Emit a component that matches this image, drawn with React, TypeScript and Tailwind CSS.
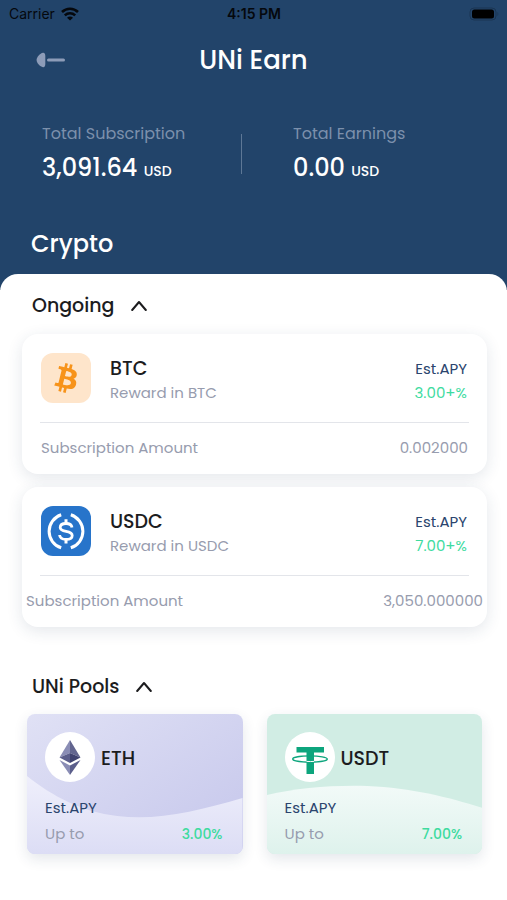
import { useState } from 'react';
import clsx from 'clsx';

type Subscription = {
  symbol: string;
  apy: string;
  amount: string;
  footerClass: string;
};

const subscriptions: Subscription[] = [
  { symbol: 'BTC', apy: '3.00+%', amount: '0.002000', footerClass: 'px-[19px]' },
  { symbol: 'USDC', apy: '7.00+%', amount: '3,050.000000', footerClass: 'px-1' }
];

const pools = [
  { symbol: 'ETH', apy: '3.00%' },
  { symbol: 'USDT', apy: '7.00%' }
];

function WifiIcon() {
  return (
    <svg width="18" height="14" viewBox="0 0 18 14" fill="none" stroke="#05080d" strokeWidth="2.6" aria-hidden="true">
      <path d="M1 5C5.6.6 12.4.6 17 5" />
      <path d="M3.8 8.4c3-2.8 7.4-2.8 10.400 0" />
      <path d="M9 13.6 6 10.700c1.700-1.600 4.300-1.600 6 0z" fill="#05080d" stroke="none" />
    </svg>
  );
}

function BatteryIcon() {
  return (
    <svg width="30" height="14" viewBox="0 0 30 14" fill="none" aria-hidden="true">
      <rect x="1" y="1" width="26" height="12" rx="4" stroke="#1a3552" />
      <rect x="3" y="2.5" width="22" height="9" rx="2.5" fill="#000" />
      <path d="M28.5 5c1 .6 1 3.4 0 4z" fill="#1a3552" />
    </svg>
  );
}

function BackIcon() {
  return (
    <svg width="30" height="16" viewBox="0 0 30 16" fill="#8d9cb8" aria-hidden="true">
      <path d="M7 .8C8.6.6 9.3 2 9.3 4v8c0 2-.7 3.4-2.3 3.2C4 14.6.6 11 .6 8S4 1.4 7 .8z" />
      <rect x="11" y="6.5" width="18" height="3" rx="1.5" />
    </svg>
  );
}

function Chevron({ open }: { open: boolean }) {
  return (
    <svg
      className={clsx(!open && 'rotate-180')}
      width="16"
      height="12"
      viewBox="0 0 16 12"
      fill="none"
      stroke="#1c1c1e"
      strokeWidth="2"
      strokeLinecap="round"
      strokeLinejoin="round"
      aria-hidden="true"
    >
      <path d="M1.2 10 8 2l6.800 8" />
    </svg>
  );
}

function BtcLogo() {
  return (
    <span className="flex size-[50px] items-center justify-center rounded-xl bg-[#fee5cb]">
      <svg width="48" height="48" viewBox="0 0 32 32" fill="#f7931a" aria-hidden="true">
        <path
          fillRule="evenodd"
          d="M23.189 14.02c.314-2.096-1.283-3.223-3.465-3.975l.708-2.84-1.728-.43-.69 2.765c-.454-.114-.92-.22-1.385-.326l.695-2.783L15.596 6l-.708 2.839c-.376-.086-.746-.17-1.104-.26l.002-.009-2.384-.595-.46 1.846s1.283.294 1.256.312c.7.175.826.638.805 1.006l-.806 3.235c.048.012.11.03.18.057l-.183-.045-1.13 4.532c-.086.212-.303.531-.793.41.018.025-1.256-.313-1.256-.313l-.858 1.978 2.25.561c.418.105.828.215 1.231.318l-.715 2.872 1.727.43.708-2.84c.472.127.93.245 1.378.357l-.706 2.828 1.728.43.715-2.866c2.948.558 5.164.333 6.097-2.333.752-2.146-.037-3.385-1.588-4.192 1.13-.26 1.98-1.003 2.207-2.538zm-3.95 5.538c-.533 2.147-4.148.986-5.32.695l.95-3.805c1.172.293 4.929.872 4.37 3.11zm.535-5.569c-.487 1.953-3.495.96-4.47.717l.86-3.45c.975.243 4.118.696 3.61 2.733z"
        />
      </svg>
    </span>
  );
}

function UsdcLogo() {
  return (
    <span className="flex size-[50px] items-center justify-center rounded-xl bg-[#2774ca]">
      <svg width="50" height="50" viewBox="0 0 50 50" fill="none" stroke="#fff" strokeWidth="3" aria-hidden="true">
        <path d="M20.2 8.8a17.300 17.300 0 0 0 0 33M29.800 8.800a17.300 17.300 0 0 1 0 33" />
        <path d="M25 13.300v4.500M25 33v4.500" />
        <path
          d="M31 21.500c-.3-2.600-2.600-4-6-4-3.500 0-5.800 1.500-5.800 3.900 0 5.600 12 2.200 12 8 0 2.500-2.500 4-6.200 4-3.800 0-6.200-1.600-6.400-4.400"
          strokeWidth="2.8"
        />
      </svg>
    </span>
  );
}

function EthLogo() {
  return (
    <svg width="50" height="50" viewBox="0 0 50 50" aria-hidden="true">
      <circle cx="25" cy="25" r="25" fill="#fff" />
      <path d="M25 8 14.500 25.500 25 21z" fill="#8a8db5" />
      <path d="M25 8l10.500 17.500L25 21z" fill="#62658f" />
      <path d="M25 21 14.500 25.500 25 31z" fill="#5b5e8b" />
      <path d="M25 21l10.500 4.500L25 31z" fill="#3f4270" />
      <path d="M14.500 28 25 33.500V43z" fill="#8a8db5" />
      <path d="M35.500 28 25 33.500V43z" fill="#5b5e8b" />
    </svg>
  );
}

function UsdtLogo() {
  return (
    <svg width="50" height="50" viewBox="0 0 50 50" aria-hidden="true">
      <circle cx="25" cy="25" r="25" fill="#fff" />
      <path d="M11.500 15h27.500v5.500h-10v21.500h-7.500V20.500h-10z" fill="#0da57d" />
      <ellipse cx="25" cy="27" rx="17.300" ry="3.100" fill="none" stroke="#0da57d" strokeWidth="1.300" />
      <path d="M21.500 29.400c2.400.2 5.100.2 7.500 0" fill="none" stroke="#fff" strokeWidth="1" />
    </svg>
  );
}

/* Soft wave behind the lower half of a pool card */
function PoolWave({ symbol }: { symbol: string }) {
  const isEth = symbol === 'ETH';
  return (
    <svg
      className="absolute inset-0 size-full"
      viewBox="0 0 215 140"
      preserveAspectRatio="none"
      aria-hidden="true"
    >
      <defs>
        <linearGradient id={`wave-${symbol}`} x1="0" y1="0" x2="0" y2="1">
          <stop offset="0" stopColor={isEth ? '#efeffb' : '#f2faf8'} />
          <stop offset="1" stopColor={isEth ? '#dcddf5' : '#def2ec'} />
        </linearGradient>
      </defs>
      <path
        d={
          isEth
            ? 'M0 62C25 82 55 98 90 102C130 107 170 97 215 84V140H0z'
            : 'M0 81C30 74 65 71 100 72C145 74 180 83 215 94V140H0z'
        }
        fill={`url(#wave-${symbol})`}
      />
    </svg>
  );
}

function StatusBar() {
  return (
    <div className="flex h-7 items-center justify-between pr-2 pl-[9px] font-['Inter',sans-serif] text-sm text-[#05080d]">
      <div className="flex flex-1 items-center gap-1.5">
        <span>Carrier</span>
        <WifiIcon />
      </div>
      <span className="font-semibold">4:15 PM</span>
      <div className="flex flex-1 justify-end">
        <BatteryIcon />
      </div>
    </div>
  );
}

function Total({ label, value }: { label: string; value: string }) {
  return (
    <div>
      <p className="text-base leading-6 text-[#7c90ac]">{label}</p>
      <p className="mt-1 text-2xl leading-9 font-medium text-white">
        {value} <span className="text-sm">USD</span>
      </p>
    </div>
  );
}

function SectionToggle({ title, open, onToggle }: { title: string; open: boolean; onToggle: () => void }) {
  return (
    <button
      type="button"
      onClick={onToggle}
      aria-expanded={open}
      className="ml-8 flex items-center gap-[17px] text-[19px] leading-7 font-medium text-[#1c1c1e]"
    >
      <span>{title}</span>
      <Chevron open={open} />
    </button>
  );
}

function SubscriptionCard({ item }: { item: Subscription }) {
  return (
    <article className="rounded-2xl bg-white shadow-[0_4px_16px_rgba(30,60,90,0.12)]">
      <div className="mx-[18px] flex h-[89px] items-start border-b border-[#e3e5ea] pt-[19px] pr-0.5 pl-px">
        {item.symbol === 'BTC' ? <BtcLogo /> : <UsdcLogo />}
        <div className="ml-[19px] flex-1 pt-1">
          <h3 className="text-[19px] leading-6 font-medium text-[#1c1c1e]">{item.symbol}</h3>
          <p className="text-[15px] leading-6 text-[#979cae]">Reward in {item.symbol}</p>
        </div>
        <div className="pt-1 text-right text-[15px] leading-6">
          <p className="text-[#2b456e]">Est.APY</p>
          <p className="text-[#3edb9f]">{item.apy}</p>
        </div>
      </div>
      <div
        className={clsx('flex h-[51px] items-center justify-between text-[15px] text-[#979cae]', item.footerClass)}
      >
        <span>Subscription Amount</span>
        <span>{item.amount}</span>
      </div>
    </article>
  );
}

function PoolCard({ symbol, apy }: { symbol: string; apy: string }) {
  return (
    <article
      className={clsx(
        'relative h-[140px] overflow-hidden rounded-lg shadow-[0_5px_14px_rgba(30,60,90,0.12)]',
        symbol === 'ETH' ? 'bg-linear-to-br from-[#e0e1f5] to-[#c5c6eb]' : 'bg-[#d1ede4]'
      )}
    >
      <PoolWave symbol={symbol} />
      <div className="relative pt-[18px] pr-5 pl-[18px]">
        <div className="flex items-center gap-1.5">
          {symbol === 'ETH' ? <EthLogo /> : <UsdtLogo />}
          <h3 className="pt-1 text-[19px] font-medium text-[#1c1c1e]">{symbol}</h3>
        </div>
        <p className="mt-3.5 text-[15px] leading-6 text-[#2b456e]">Est.APY</p>
        <div className="mt-0.5 flex items-center justify-between leading-6">
          <span className="text-[15px] text-[#979cae]">Up to</span>
          <span className="text-sm font-medium text-[#3edb9f]">{apy}</span>
        </div>
      </div>
    </article>
  );
}

export default function App() {
  const [ongoingOpen, setOngoingOpen] = useState(true);
  const [poolsOpen, setPoolsOpen] = useState(true);

  return (
    <div className="min-h-screen bg-white font-['Poppins','Inter',sans-serif]">
      <header className="bg-[#22446a] pb-7">
        <StatusBar />

        <div className="grid h-16 grid-cols-[1fr_auto_1fr] items-center px-9">
          <button type="button" aria-label="Back" className="justify-self-start">
            <BackIcon />
          </button>
          <h1 className="text-[26px] font-medium text-white">UNi Earn</h1>
        </div>

        <div className="mt-[30px] grid grid-cols-[199px_1px_1fr] pl-[42px]">
          <Total label="Total Subscription" value="3,091.64" />
          <div className="mt-3 h-10 bg-[#5e7896]" />
          <div className="pl-[51px]">
            <Total label="Total Earnings" value="0.00" />
          </div>
        </div>

        <h2 className="mt-10 ml-[31px] text-2xl leading-9 font-medium text-white">Crypto</h2>
      </header>

      <main className="relative -mt-4 rounded-t-[18px] bg-white pt-[18px] pb-11">
        <SectionToggle title="Ongoing" open={ongoingOpen} onToggle={() => setOngoingOpen(!ongoingOpen)} />
        {ongoingOpen && (
          <div className="mt-3.5 mr-5 ml-[22px] flex flex-col gap-[13px]">
            {subscriptions.map((item) => (
              <SubscriptionCard key={item.symbol} item={item} />
            ))}
          </div>
        )}

        <div className="mt-[46px]">
          <SectionToggle title="UNi Pools" open={poolsOpen} onToggle={() => setPoolsOpen(!poolsOpen)} />
        </div>
        {poolsOpen && (
          <div className="mt-[13px] mr-[25px] ml-[27px] grid grid-cols-2 gap-6">
            {pools.map((pool) => (
              <PoolCard key={pool.symbol} symbol={pool.symbol} apy={pool.apy} />
            ))}
          </div>
        )}
      </main>
    </div>
  );
}
